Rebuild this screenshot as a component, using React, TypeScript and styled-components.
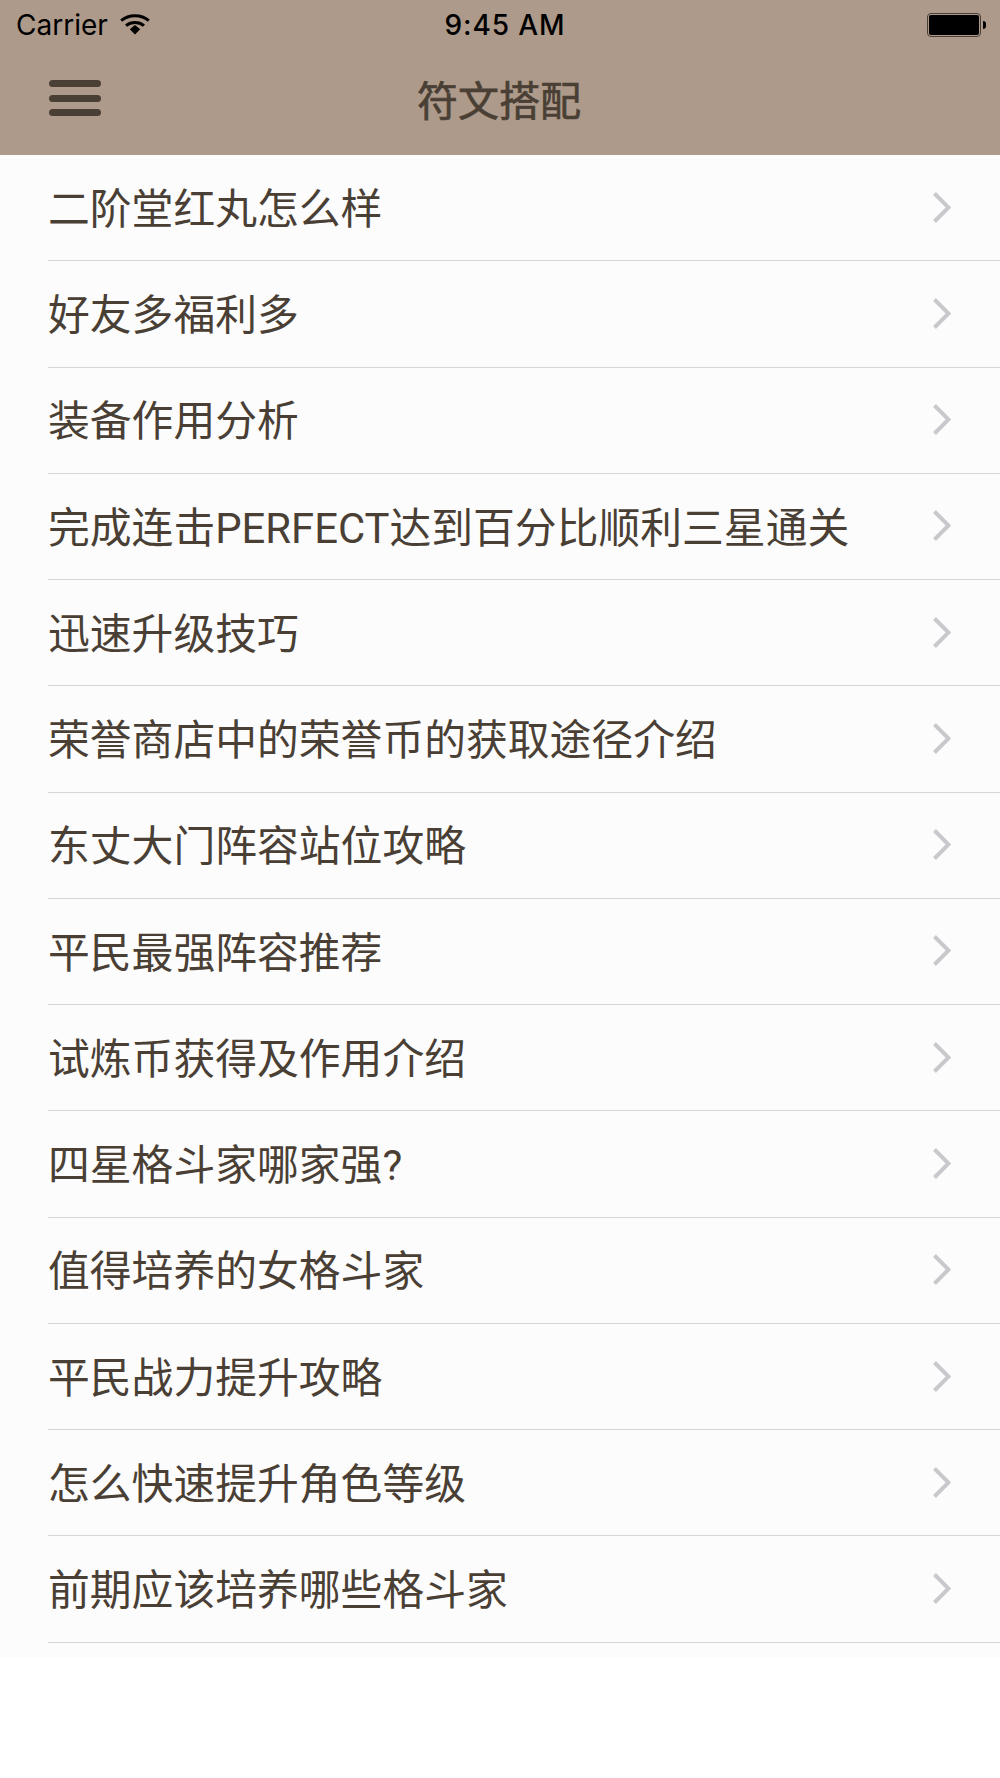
import React from "react";
import styled, { createGlobalStyle } from "styled-components";

const colors = {
    bar: "#ad9a8a",
    ink: "#4a3f35",
    list: "#fcfcfc",
    line: "#d6d6d8",
    chevron: "#c8c8cd",
};

const items: string[] = [
    "二阶堂红丸怎么样",
    "好友多福利多",
    "装备作用分析",
    "完成连击PERFECT达到百分比顺利三星通关",
    "迅速升级技巧",
    "荣誉商店中的荣誉币的获取途径介绍",
    "东丈大门阵容站位攻略",
    "平民最强阵容推荐",
    "试炼币获得及作用介绍",
    "四星格斗家哪家强?",
    "值得培养的女格斗家",
    "平民战力提升攻略",
    "怎么快速提升角色等级",
    "前期应该培养哪些格斗家",
];

const App: React.FC = () => {
    return (
        <>
            <GlobalStyle />
            <Page>
                <Header>
                    <StatusBar>
                        <StatusLeft>
                            <Carrier>Carrier</Carrier>
                            <WifiIcon />
                        </StatusLeft>
                        <Clock>9:45 AM</Clock>
                        <StatusRight>
                            <Battery>
                                <BatteryFill />
                            </Battery>
                            <BatteryNub />
                        </StatusRight>
                    </StatusBar>
                    <NavBar>
                        <Hamburger>
                            <HamburgerBar />
                            <HamburgerBar />
                            <HamburgerBar />
                        </Hamburger>
                        <Title>符文搭配</Title>
                    </NavBar>
                </Header>
                <List>
                    {items.map((item) => (
                        <Row key={item}>
                            <RowText>{item}</RowText>
                            <Chevron />
                        </Row>
                    ))}
                </List>
            </Page>
        </>
    );
};

export default App;

const WifiIcon: React.FC = () => (
    <WifiSvg viewBox="0 0 30 22" fill="none">
        <path d="M1.2 7.6C8.8 1 21.2 1 28.8 7.6" stroke="#000" strokeWidth="3" />
        <path d="M6 12.6C11.2 8.4 18.8 8.4 24 12.6" stroke="#000" strokeWidth="3" />
        <path d="M9.8 16.2L15 12L20.2 16.2L15 21.5Z" fill="#000" />
    </WifiSvg>
);

const Chevron: React.FC = () => (
    <ChevronSvg viewBox="0 0 18 31" fill="none">
        <path d="M1.5 1.5L15.5 15.5L1.5 29.5" stroke={colors.chevron} strokeWidth="4" />
    </ChevronSvg>
);

const GlobalStyle = createGlobalStyle`
    html, body {
        margin: 0;
        padding: 0;
        background: #fff;
    }
`;

const Page = styled.div`
    width: 1000px;
    height: 1778px;
    overflow: hidden;
    font-family: "Noto Sans CJK SC", "Noto Sans", sans-serif;
`;

const Header = styled.header`
    background-color: ${colors.bar};
    height: 155px;
    display: flex;
    flex-direction: column;
`;

const StatusBar = styled.div`
    height: 50px;
    display: grid;
    grid-template-columns: 1fr auto 1fr;
    align-items: center;
    padding: 0 14px 0 16px;
    color: #000;
`;

const StatusLeft = styled.div`
    display: flex;
    align-items: center;
    gap: 12px;
`;

const Carrier = styled.span`
    font-family: Inter, "Liberation Sans", sans-serif;
    font-size: 28px;
    line-height: 50px;
`;

const WifiSvg = styled.svg`
    width: 30px;
    height: 22px;
    margin-bottom: 2px;
`;

const Clock = styled.span`
    font-family: Inter, "Liberation Sans", sans-serif;
    font-size: 28px;
    font-weight: 500;
    letter-spacing: 0.9px;
    margin-left: 8px;
`;

const StatusRight = styled.div`
    display: flex;
    align-items: center;
    justify-content: flex-end;
`;

const Battery = styled.div`
    box-sizing: border-box;
    width: 54px;
    height: 24px;
    border: 1px solid #4a3f35;
    border-radius: 4px;
    padding: 1px;
    display: flex;
`;

const BatteryFill = styled.div`
    flex: 1;
    background: #000;
    border-radius: 2px;
`;

const BatteryNub = styled.div`
    width: 3px;
    height: 8px;
    margin-left: 2px;
    background: #000;
    border-radius: 0 3px 3px 0;
`;

const NavBar = styled.div`
    flex: 1;
    display: flex;
    align-items: center;
    justify-content: center;
    position: relative;
    padding-bottom: 9px;
`;

const Hamburger = styled.div`
    position: absolute;
    left: 49px;
    top: 30px;
    width: 52px;
    display: flex;
    flex-direction: column;
    gap: 7.5px;
`;

const HamburgerBar = styled.div`
    height: 7px;
    border-radius: 3.5px;
    background: ${colors.ink};
    filter: blur(0.5px);
`;

const Title = styled.h1`
    margin: 0 0 0 -2px;
    color: ${colors.ink};
    font-size: 41px;
    font-weight: 400;
    line-height: 1;
    -webkit-text-stroke: 0.7px ${colors.ink};
`;

const List = styled.div`
    background: ${colors.list};
    height: 1502px;
`;

const Row = styled.div`
    box-sizing: border-box;
    height: 106.27px;
    margin-left: 48px;
    padding-right: 49px;
    display: flex;
    align-items: center;
    justify-content: space-between;
    border-bottom: 1.5px solid ${colors.line};
`;

const RowText = styled.span`
    color: ${colors.ink};
    font-family: Roboto, "Noto Sans CJK SC", sans-serif;
    font-size: 41.8px;
    font-weight: 400;
    line-height: 1;
    margin-top: 4px;
`;

const ChevronSvg = styled.svg`
    width: 18px;
    height: 31px;
    flex: none;
    margin-bottom: 1px;
`;
